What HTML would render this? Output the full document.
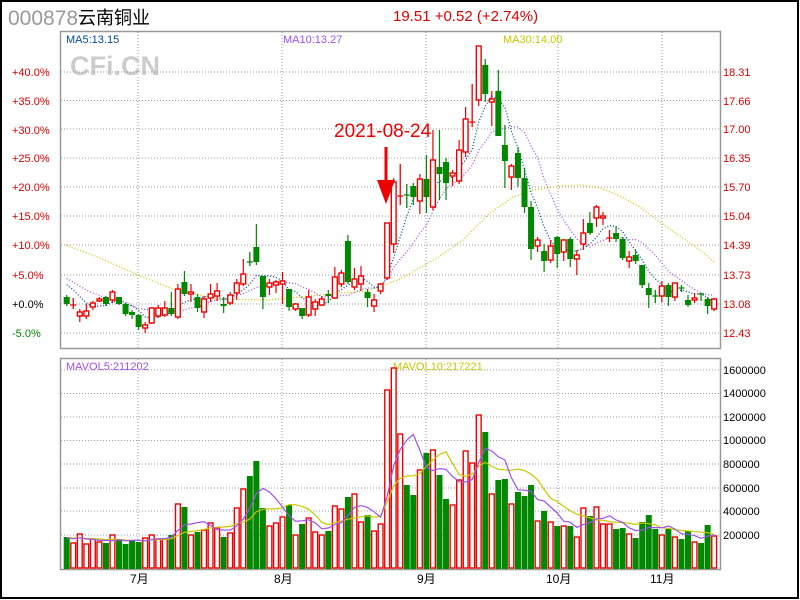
<!DOCTYPE html>
<html><head><meta charset="utf-8"><style>
html,body{margin:0;padding:0;background:#fff;}
svg{display:block;}
text{font-family:"Liberation Sans","Noto Sans CJK SC",sans-serif;}
</style></head><body>
<svg id="s" width="800" height="600" viewBox="0 0 800 600" xmlns="http://www.w3.org/2000/svg">
<rect x="0" y="0" width="800" height="600" fill="#fff"/>
<rect x="1" y="1" width="797" height="597" fill="none" stroke="#000" stroke-width="2"/>
<text x="8" y="25" font-size="21" fill="#999">000878</text>
<text x="78" y="24" font-size="18" fill="#000" font-family="Noto Sans CJK SC,sans-serif">云南铜业</text>
<text x="393" y="21" font-size="15" fill="#d00" font-family="Liberation Mono,monospace">19.51 +0.52 (+2.74%)</text>
<text x="70" y="75" font-size="27" font-weight="bold" fill="#ccc">CFi.CN</text>
<g id="grid" stroke="#999" stroke-width="1" stroke-dasharray="1 2" fill="none"></g>
<rect x="60.5" y="31.5" width="660" height="317" fill="none" stroke="#999" stroke-width="1.5"/>
<path d="M60.5 358.5H720.5V569.5H60.5Z" fill="none" stroke="#999" stroke-width="1.5"/>
<g font-size="11" font-family="Liberation Mono,monospace">
<text x="66" y="43" fill="#004a9a">MA5:13.15</text>
<text x="283" y="43" fill="#a050f0">MA10:13.27</text>
<text x="503" y="43" fill="#c8c800">MA30:14.00</text>
<text x="66" y="370" fill="#a050f0">MAVOL5:211202</text>
<text x="393" y="370" fill="#c8c800">MAVOL10:217221</text>
</g>
<g font-size="11" fill="#d00" font-family="Liberation Mono,monospace">
<text x="12" y="76">+40.0%</text><text x="12" y="105">+35.0%</text><text x="12" y="134">+30.0%</text>
<text x="12" y="162">+25.0%</text><text x="12" y="191">+20.0%</text><text x="12" y="220">+15.0%</text>
<text x="12" y="249">+10.0%</text><text x="12" y="279">+5.0%</text>
<text x="12" y="308" fill="#000">+0.0%</text><text x="12" y="337" fill="#080">-5.0%</text>
<text x="723" y="76">18.31</text><text x="723" y="105">17.66</text><text x="723" y="133">17.00</text>
<text x="723" y="162">16.35</text><text x="723" y="191">15.70</text><text x="723" y="220">15.04</text>
<text x="723" y="249">14.39</text><text x="723" y="279">13.73</text><text x="723" y="308">13.08</text>
<text x="723" y="337">12.43</text>
</g>
<g font-size="11" fill="#000" font-family="Liberation Mono,monospace">
<text x="723" y="374">1600000</text><text x="723" y="397">1400000</text><text x="723" y="421">1200000</text>
<text x="723" y="444">1000000</text><text x="723" y="468">800000</text><text x="723" y="492">600000</text>
<text x="723" y="515">400000</text><text x="723" y="539">200000</text>
</g>
<g font-size="12" fill="#000">
<text x="130" y="583">7月</text><text x="274" y="583">8月</text><text x="417" y="583">9月</text>
<text x="546" y="583">10月</text><text x="650" y="583">11月</text>
</g>
<g id="ma"></g>
<g id="c"></g>
<text x="334" y="137" font-size="19" fill="#e00">2021-08-24</text>
<path d="M386 147V186" stroke="#e00" stroke-width="3"/>
<path d="M377 180L395 180L386 204Z" fill="#e00"/>
</svg>
<script>
var NS="http://www.w3.org/2000/svg";
function el(p,t,a){var e=document.createElementNS(NS,t);for(var k in a)e.setAttribute(k,a[k]);p.appendChild(e);return e;}
var g=document.getElementById('grid');
var hy=[72,100.5,129,158,187,216,245,275,304,333],vy=[370,393.5,417,440.5,464,488,511,535],vx=[138,282,426,558,662];
hy.forEach(function(y){el(g,'path',{d:'M61 '+y+'H720'});});
vy.forEach(function(y){el(g,'path',{d:'M61 '+y+'H720'});});
vx.forEach(function(x){el(g,'path',{d:'M'+x+' 32V348M'+x+' 359V569'});});
var D=[
['g',297,304,295,306,537],['r',305,305,298,309,543],['r',312,316,309,322,534],['r',311,316,304,319,544],['r',303,307,301,310,539],
['r',299,301,297,302,542],['g',297,304,296,306,543],['r',292,300,290,303,535],['g',297,304,297,305,540],['g',304,314,303,316,544],
['g',312,315,310,319,540],['g',315,327,314,330,542],['r',325,328,322,333,538],['r',308,323,307,324,535],['r',308,316,305,318,539],
['r',308,315,301,317,539],['g',308,314,292,316,535],['r',289,317,284,319,504],['g',282,294,271,296,507],['r',292,294,284,302,535],
['g',297,308,294,312,532],['r',299,312,296,318,530],['r',294,298,284,302,523],['r',291,296,283,301,528],['g',304,306,297,313,537],
['r',295,303,292,305,533],['r',283,293,279,300,508],['r',274,284,259,286,489],['g',262,263,252,266,476],['g',247,262,224,265,461],
['g',276,297,276,309,508],['r',283,287,279,295,526],['r',282,285,280,293,523],['r',281,284,272,304,517],['g',289,307,289,311,505],
['r',304,309,303,311,535],['g',308,316,308,319,524],['r',297,315,290,317,518],['r',302,309,299,316,532],['r',299,305,296,306,535],
['g',294,296,290,303,531],['r',277,298,267,299,506],['r',273,284,270,287,509],['g',241,282,235,284,497],['r',279,287,268,290,494],
['r',276,284,266,291,522],['g',292,298,289,307,515],['r',300,306,294,312,531],['r',284,291,283,294,524],['r',223,278,223,280,390],
['r',182,244,178,253,368],['r',196,196,164,205,434],['g',195,196,184,208,485],['g',186,197,183,205,495],['r',179,201,174,214,470],
['g',179,197,155,213,453],['r',160,207,130,210,450],['g',167,174,130,200,475],['g',162,183,158,200,499],['r',173,176,170,186,505],
['r',150,181,140,184,480],['r',119,152,107,157,451],['r',122,123,84,127,463],['r',46,100,46,106,415],['g',65,94,59,102,432],
['r',99,102,91,126,494],['g',91,136,70,136,480],['g',145,161,125,188,479],['r',166,177,164,190,504],['g',153,178,147,187,492],
['g',178,207,168,213,496],['g',207,249,201,260,485],['r',240,246,237,252,521],['g',251,261,244,272,511],['r',246,260,240,263,522],
['g',237,254,236,268,526],['r',240,252,239,261,526],['g',239,259,237,267,526],['r',255,259,250,275,537],['r',233,244,219,250,508],
['g',223,233,212,235,516],['r',207,218,205,227,507],['r',216,218,212,225,524],['r',238,238,230,242,524],['g',233,239,226,242,529],
['g',239,258,237,260,528],['r',257,261,251,268,534],['g',255,261,250,264,538],['g',265,285,265,288,522],['g',288,295,283,308,515],
['g',296,296,290,303,529],['r',286,296,281,302,535],['g',285,297,283,306,529],['r',283,297,283,301,537],['g',288,288,285,292,539],
['g',300,305,295,307,531],['r',298,300,293,303,542],['g',294,294,293,301,543],['g',299,306,297,314,525],['r',299,309,298,311,536]];
var c=document.getElementById('c'),ma=document.getElementById('ma');
var R='#e00',G='#080';
function X(i){return 66.7+6.54*i;}
// MA lines
var closes=D.map(function(d){return d[0]=='r'?d[1]:d[2];});
var pre=[268,270,272,274,276,278,279,280,282];
var all=pre.concat(closes);
function maLine(n,col){var pts=[];for(var i=0;i<D.length;i++){var k=i+pre.length,s=0;for(var j=0;j<n;j++)s+=all[k-j];pts.push(X(i).toFixed(1)+','+(s/n).toFixed(1));}
el(ma,'polyline',{points:pts.join(' '),fill:'none',stroke:col,'stroke-width':1.3,'stroke-dasharray':'1 2'});}
el(ma,'polyline',{points:'66,245 100,258 140,276 173,289 217,299 267,300 300,297 340,293 367,291 400,279 437,258 463,240 490,213 513,197 533,190 560,186 580,185 600,188 620,196 640,207 660,222 680,236 700,250 714,262',fill:'none',stroke:'#c8c800','stroke-width':1.3,'stroke-dasharray':'1 2'});
maLine(10,'#a050f0');maLine(5,'#004a9a');
// volume MA
var vols=D.map(function(d){return d[5];});var vp=[538,537,539,536,538,537,539,538,537];var va=vp.concat(vols);
function vma(n,col){var pts=[];for(var i=0;i<D.length;i++){var k=i+vp.length,s=0;for(var j=0;j<n;j++)s+=va[k-j];pts.push(X(i).toFixed(1)+','+(s/n).toFixed(1));}
el(ma,'polyline',{points:pts.join(' '),fill:'none',stroke:col,'stroke-width':1.2});}
// candles + volume
D.forEach(function(d,i){var x=X(i),col=d[0]=='r'?R:G,t=d[1],b=d[2];
 if(b-t<1.5){el(c,'path',{d:'M'+x+' '+d[3]+'V'+d[4]+'M'+(x-3)+' '+t+'H'+(x+3),stroke:col,'stroke-width':1.3});}
 else if(d[0]=='r'){el(c,'path',{d:'M'+x+' '+d[3]+'V'+t+'M'+x+' '+b+'V'+d[4],stroke:col,'stroke-width':1.2});
  el(c,'rect',{x:x-2.4,y:t,width:4.8,height:b-t,fill:'#fff',stroke:col,'stroke-width':1.4});}
 else{el(c,'path',{d:'M'+x+' '+d[3]+'V'+d[4],stroke:col,'stroke-width':1.2});
  el(c,'rect',{x:x-3,y:t,width:6,height:b-t,fill:col});}
 var vt=d[5];
 if(d[0]=='r')el(c,'rect',{x:x-2.4,y:vt,width:4.8,height:568-vt,fill:'#fff',stroke:R,'stroke-width':1.4});
 else el(c,'rect',{x:x-3,y:vt,width:6,height:569-vt,fill:G});
});
var c2=el(document.getElementById('s'),'g',{});
(function(){var save=ma;ma=c2;vma(10,'#c8c800');vma(5,'#a050f0');ma=save;})();
</script>
</body></html>
